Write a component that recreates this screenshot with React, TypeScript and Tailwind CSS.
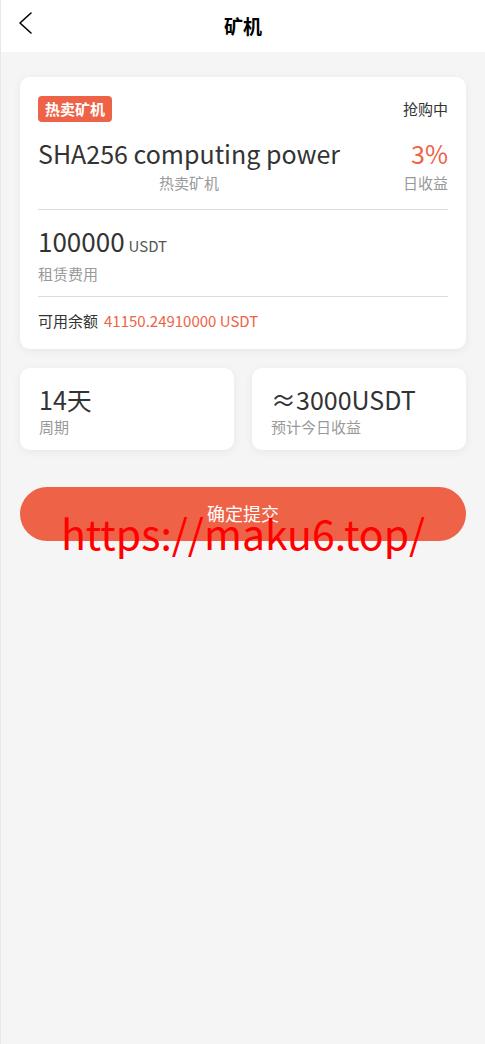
const font = { fontFamily: '"Noto Sans CJK SC", "Noto Sans", sans-serif' };

const MinerDetail = () => {
  return (
    <div
      className="relative min-h-[1044px] w-full bg-[#f5f5f5] border-l border-[#e3e9f3]"
      style={font}
    >
      <div className="relative flex h-[52px] items-center justify-center bg-white">
        <button className="absolute left-[14px] top-[10px] text-black">
          <svg width="20" height="26" viewBox="0 0 20 26" fill="none">
            <polyline points="16,3 5,13 16,23" stroke="currentColor" strokeWidth="1.6" strokeLinecap="round" strokeLinejoin="round" />
          </svg>
        </button>
        <h1 className="text-[19px] font-bold text-black">矿机</h1>
      </div>

      <div className="px-[19px] pt-[25px]">
        <div className="rounded-[10px] bg-white px-[18px] pb-[18px] pt-[19px] shadow-[0_2px_10px_rgba(0,0,0,0.06)]">
          <div className="flex items-center justify-between">
            <span className="rounded-[4px] bg-[#ee6347] px-[7px] py-[1px] text-[15px] font-bold leading-[24px] text-white">
              热卖矿机
            </span>
            <span className="text-[15px] text-[#333]">抢购中</span>
          </div>
          <div className="mt-[14px] flex justify-between">
            <div className="flex flex-col items-center">
              <span className="text-[25px] leading-[34px] text-[#333]">SHA256 computing power</span>
              <span className="mt-[3px] text-[15px] leading-[20px] text-[#999]">热卖矿机</span>
            </div>
            <div className="flex flex-col items-end">
              <span className="text-[25px] leading-[34px] text-[#ee6347]">3%</span>
              <span className="mt-[3px] text-[15px] leading-[20px] text-[#999]">日收益</span>
            </div>
          </div>
          <div className="mt-[16px] h-px bg-[#dcdcdc]" />
          <div className="mt-[15px] flex items-baseline">
            <span className="text-[26px] leading-[32px] text-[#333]">100000</span>
            <span className="ml-[4px] text-[15px] text-[#555]">USDT</span>
          </div>
          <div className="mt-[6px] text-[15px] leading-[20px] text-[#999]">租赁费用</div>
          <div className="mt-[12px] h-px bg-[#dcdcdc]" />
          <div className="mt-[14px] flex text-[15px] leading-[20px]">
            <span className="text-[#333]">可用余额</span>
            <span className="ml-[6px] text-[#ee6347]">41150.24910000 USDT</span>
          </div>
        </div>

        <div className="mt-[19px] grid grid-cols-2 gap-[18px]">
          <div className="h-[82px] rounded-[10px] bg-white px-[19px] pt-[16px] shadow-[0_2px_10px_rgba(0,0,0,0.06)]">
            <div className="text-[25px] leading-[30px] text-[#333]">14天</div>
            <div className="mt-[3px] text-[15px] leading-[20px] text-[#999]">周期</div>
          </div>
          <div className="h-[82px] rounded-[10px] bg-white px-[19px] pt-[16px] shadow-[0_2px_10px_rgba(0,0,0,0.06)]">
            <div className="text-[25px] leading-[30px] text-[#333]">≈3000USDT</div>
            <div className="mt-[3px] text-[15px] leading-[20px] text-[#999]">预计今日收益</div>
          </div>
        </div>

        <button className="mt-[37px] flex h-[54px] w-full items-center justify-center rounded-full bg-[#ee6347] text-[18px] text-white">
          确定提交
        </button>
      </div>

      <div className="pointer-events-none absolute left-0 right-0 top-[504px] text-center text-[41px] leading-[56px] text-[#ff0000]">
        https://maku6.top/
      </div>
    </div>
  );
};

export default function App() {
  return <MinerDetail />;
}
